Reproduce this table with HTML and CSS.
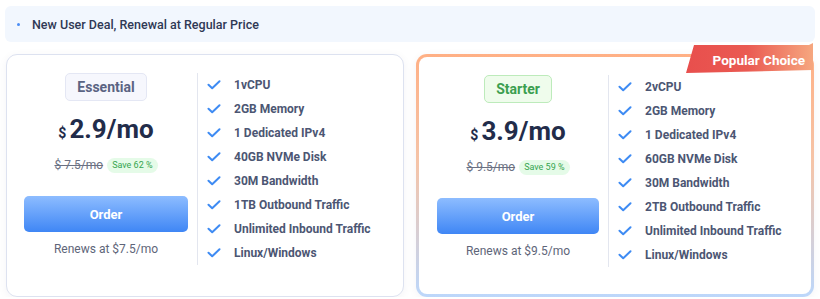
FILE: index.html
```html
<!DOCTYPE html>
<html>
<head>
<meta charset="utf-8">
<link rel="stylesheet" href="styles.css">
</head>
<body>
<div class="page">
  <div class="notice"><span class="dot"></span><span>New User Deal, Renewal at Regular Price</span></div>
  <div class="plans">
    <div class="card">
      <div class="main">
        <div class="tag">Essential</div>
        <div class="price"><span class="cur">$</span><span class="amt">2.9/mo</span></div>
        <div class="orig"><s>$ 7.5/mo</s><span class="save">Save 62 %</span></div>
        <button class="order">Order</button>
        <div class="renew">Renews at $7.5/mo</div>
      </div>
      <ul class="feats">
        <li><svg viewBox="0 0 14 10"><path d="M1.5 4.8 L5.2 8.3 L12.5 1.3"/></svg>1vCPU</li>
        <li><svg viewBox="0 0 14 10"><path d="M1.5 4.8 L5.2 8.3 L12.5 1.3"/></svg>2GB Memory</li>
        <li><svg viewBox="0 0 14 10"><path d="M1.5 4.8 L5.2 8.3 L12.5 1.3"/></svg>1 Dedicated IPv4</li>
        <li><svg viewBox="0 0 14 10"><path d="M1.5 4.8 L5.2 8.3 L12.5 1.3"/></svg>40GB NVMe Disk</li>
        <li><svg viewBox="0 0 14 10"><path d="M1.5 4.8 L5.2 8.3 L12.5 1.3"/></svg>30M Bandwidth</li>
        <li><svg viewBox="0 0 14 10"><path d="M1.5 4.8 L5.2 8.3 L12.5 1.3"/></svg>1TB Outbound Traffic</li>
        <li><svg viewBox="0 0 14 10"><path d="M1.5 4.8 L5.2 8.3 L12.5 1.3"/></svg>Unlimited Inbound Traffic</li>
        <li><svg viewBox="0 0 14 10"><path d="M1.5 4.8 L5.2 8.3 L12.5 1.3"/></svg>Linux/Windows</li>
      </ul>
    </div>
    <div class="card popular">
      <div class="ribbon">Popular Choice</div>
      <div class="main">
        <div class="tag green">Starter</div>
        <div class="price"><span class="cur">$</span><span class="amt">3.9/mo</span></div>
        <div class="orig"><s>$ 9.5/mo</s><span class="save">Save 59 %</span></div>
        <button class="order">Order</button>
        <div class="renew">Renews at $9.5/mo</div>
      </div>
      <ul class="feats">
        <li><svg viewBox="0 0 14 10"><path d="M1.5 4.8 L5.2 8.3 L12.5 1.3"/></svg>2vCPU</li>
        <li><svg viewBox="0 0 14 10"><path d="M1.5 4.8 L5.2 8.3 L12.5 1.3"/></svg>2GB Memory</li>
        <li><svg viewBox="0 0 14 10"><path d="M1.5 4.8 L5.2 8.3 L12.5 1.3"/></svg>1 Dedicated IPv4</li>
        <li><svg viewBox="0 0 14 10"><path d="M1.5 4.8 L5.2 8.3 L12.5 1.3"/></svg>60GB NVMe Disk</li>
        <li><svg viewBox="0 0 14 10"><path d="M1.5 4.8 L5.2 8.3 L12.5 1.3"/></svg>30M Bandwidth</li>
        <li><svg viewBox="0 0 14 10"><path d="M1.5 4.8 L5.2 8.3 L12.5 1.3"/></svg>2TB Outbound Traffic</li>
        <li><svg viewBox="0 0 14 10"><path d="M1.5 4.8 L5.2 8.3 L12.5 1.3"/></svg>Unlimited Inbound Traffic</li>
        <li><svg viewBox="0 0 14 10"><path d="M1.5 4.8 L5.2 8.3 L12.5 1.3"/></svg>Linux/Windows</li>
      </ul>
    </div>
  </div>
</div>
</body>
</html>
```
FILE: styles.css
```css
* { box-sizing: border-box; }
body {
  margin: 0;
  background: #ffffff;
  font-family: Roboto, "Liberation Sans", sans-serif;
  color: #2b3550;
}
.page {
  padding: 6px 5px 0 5px;
  width: 820px;
}
.notice {
  height: 36px;
  background: #f2f7fe;
  border-radius: 6px;
  display: flex;
  align-items: center;
  padding-left: 12px;
  font-size: 12.5px;
  font-weight: 500;
  color: #2f3955;
}
.notice .dot {
  width: 3px;
  height: 3px;
  border-radius: 50%;
  background: #4b8df5;
  margin-right: 12px;
}
.plans {
  display: flex;
  gap: 12px;
  margin-top: 12px;
  padding-left: 1px;
}
.card {
  position: relative;
  width: 398px;
  height: 243px;
  border: 1px solid #dde2f0;
  border-radius: 11px;
  background: #fff;
  display: flex;
  padding: 18px 0 0 17px;
  box-shadow: 0 2px 10px rgba(30, 40, 80, 0.05);
}
.card.popular {
  border: 3px solid transparent;
  background: linear-gradient(#fff, #fff) padding-box,
              linear-gradient(180deg, #ffb085 0%, #f5c4a8 45%, #bcd7fb 100%) border-box;
  padding-left: 18px;
}
.main {
  width: 164px;
  display: flex;
  flex-direction: column;
  align-items: center;
}
.popular .main { width: 162px; }
.tag {
  height: 28px;
  padding: 0 11px;
  border: 1px solid #e4e7f4;
  background: #f6f7fd;
  border-radius: 5px;
  font-size: 14px;
  font-weight: 700;
  color: #5a6483;
  display: flex;
  align-items: center;
}
.tag.green {
  background: #effcec;
  border-color: #bdebbb;
  color: #3c9f50;
}
.price {
  margin-top: 13px;
  display: flex;
  align-items: baseline;
  color: #222c4a;
  font-weight: 700;
  height: 30px;
}
.cur { font-size: 14px; margin-right: 3px; }
.amt { font-size: 26px; }
.orig {
  margin-top: 13px;
  display: flex;
  align-items: center;
  height: 16px;
  font-size: 12px;
  color: #6b7183;
}
.orig s { text-decoration-thickness: 1px; }
.save {
  margin-left: 4px;
  background: #e5fbe8;
  color: #35a550;
  font-size: 9px;
  height: 15px;
  padding: 0 5px;
  border-radius: 8px;
  display: flex;
  align-items: center;
}
.order {
  margin-top: 23px;
  width: 100%;
  height: 36px;
  border: 0;
  border-radius: 5px;
  background: linear-gradient(180deg, #8dbcff 0%, #3f86f5 100%);
  color: #fff;
  font-family: Roboto, "Liberation Sans", sans-serif;
  font-size: 13px;
  font-weight: 700;
}
.renew {
  margin-top: 10px;
  font-size: 12px;
  color: #5e6579;
}
.feats {
  list-style: none;
  margin: 0 0 0 9px;
  padding: 0 0 0 9px;
  border-left: 1px solid #e3e6ef;
  height: 192px;
}
.feats li {
  height: 24px;
  display: flex;
  align-items: center;
  font-size: 12px;
  font-weight: 700;
  color: #4c5673;
}
.feats svg {
  width: 14px;
  height: 10px;
  margin-right: 13px;
  fill: none;
  stroke: #3e8bf3;
  stroke-width: 2;
  stroke-linecap: round;
  stroke-linejoin: round;
}
.ribbon {
  position: absolute;
  top: -14px;
  right: -3px;
  width: 128px;
  height: 30px;
  background: linear-gradient(90deg, #e84f4d 0%, #ea5a52 48%, #f6a880 100%);
  clip-path: polygon(8px 2px, 123px 2px, 127px 0, 127px 27px, 0 30px);
  border-radius: 10px 0 0 0;
  color: #fff;
  font-size: 13.5px;
  font-weight: 700;
  display: flex;
  align-items: center;
  justify-content: flex-end;
  padding: 3px 9px 0 0;
}
```
